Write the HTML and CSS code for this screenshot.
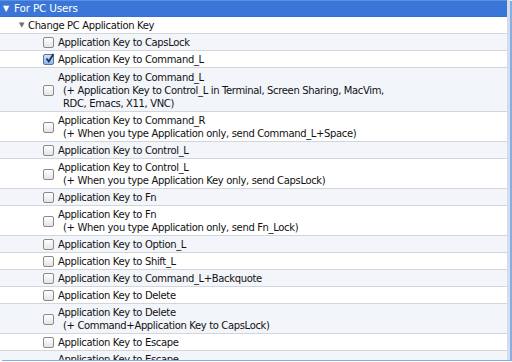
FILE: index.html
```html
<!DOCTYPE html>
<html lang="en">
<head>
    <meta charset="UTF-8">
    <title>KeyRemap4MacBook - For PC Users</title>
    <link rel="stylesheet" href="styles.css">
</head>
<body>
    <div class="outline">
        <div class="row header">
            <span class="disclosure">&#9660;</span>
            <span class="label">For PC Users</span>
        </div>
        <div class="row group">
            <span class="disclosure">&#9660;</span>
            <span class="label">Change PC Application Key</span>
        </div>

        <div class="row item">
            <span class="box"></span>
            <div class="label">Application Key to CapsLock</div>
        </div>
        <div class="row item">
            <span class="box checked"><svg viewBox="0 0 11 11" width="11" height="11"><path d="M2.5 5.5 L4.8 8.5 L9.5 1" fill="none" stroke="#1c2f57" stroke-width="1.8"/></svg></span>
            <div class="label">Application Key to Command_L</div>
        </div>
        <div class="row item">
            <span class="box"></span>
            <div class="label">Application Key to Command_L<span class="note">(+ Application Key to Control_L in Terminal, Screen Sharing, MacVim,<br>RDC, Emacs, X11, VNC)</span></div>
        </div>
        <div class="row item">
            <span class="box"></span>
            <div class="label">Application Key to Command_R<span class="note">(+ When you type Application only, send Command_L+Space)</span></div>
        </div>
        <div class="row item">
            <span class="box"></span>
            <div class="label">Application Key to Control_L</div>
        </div>
        <div class="row item">
            <span class="box"></span>
            <div class="label">Application Key to Control_L<span class="note">(+ When you type Application Key only, send CapsLock)</span></div>
        </div>
        <div class="row item">
            <span class="box"></span>
            <div class="label">Application Key to Fn</div>
        </div>
        <div class="row item">
            <span class="box"></span>
            <div class="label">Application Key to Fn<span class="note">(+ When you type Application only, send Fn_Lock)</span></div>
        </div>
        <div class="row item">
            <span class="box"></span>
            <div class="label">Application Key to Option_L</div>
        </div>
        <div class="row item">
            <span class="box"></span>
            <div class="label">Application Key to Shift_L</div>
        </div>
        <div class="row item">
            <span class="box"></span>
            <div class="label">Application Key to Command_L+Backquote</div>
        </div>
        <div class="row item">
            <span class="box"></span>
            <div class="label">Application Key to Delete</div>
        </div>
        <div class="row item">
            <span class="box"></span>
            <div class="label">Application Key to Delete<span class="note">(+ Command+Application Key to CapsLock)</span></div>
        </div>
        <div class="row item">
            <span class="box"></span>
            <div class="label">Application Key to Escape</div>
        </div>
        <div class="row item">
            <span class="box"></span>
            <div class="label">Application Key to Escape<span class="note">(+ When you type Application only, send Escape)</span></div>
        </div>
    </div>
</body>
</html>
```

FILE: styles.css
```css
body, html {
    margin: 0;
    padding: 0;
    height: 100%;
    overflow: hidden;
    background-color: #ffffff;
}

.outline {
    width: 507px;
    height: 360px;
    overflow: hidden;
    border-right: 3px solid #d6dde6;
    box-shadow: 2px 1px 0 0 #86aee6;
    font-family: "DejaVu Sans", sans-serif;
    font-size: 10px;
    letter-spacing: -0.35px;
    color: #111;
}

.row {
    display: flex;
    align-items: center;
    padding: 2px 0 1px;
    line-height: 13px;
    border-bottom: 1px solid #d3d5d8;
    background-color: #ffffff;
}

.row:nth-child(odd) {
    background-color: #f2f5fa;
}

.header {
    background-color: #3a76d7 !important;
    color: #ffffff;
    border-top: 1px solid #5d8fe0;
    padding-top: 1px;
    border-bottom: 1px solid #3470d2;
    font-size: 10.5px;
    letter-spacing: -0.2px;
}

.header .disclosure {
    width: 11px;
    padding-left: 3px;
    font-size: 8px;
    color: #ffffff;
}

.group {
    padding-left: 19px;
}

.group .disclosure {
    width: 9px;
    font-size: 7px;
    color: #6f6f6f;
}

.item {
    padding-left: 43px;
}

.item:nth-child(5) {
    padding-top: 3px;
}

.box {
    flex: none;
    width: 9px;
    height: 9px;
    margin-right: 4px;
    border: 1px solid #8a8a8a;
    border-radius: 2px;
    background: linear-gradient(#ffffff, #e4e4e4);
    position: relative;
}

.box.checked {
    background: linear-gradient(#cfe0f7, #8eb5ea);
    border-color: #5577a8;
}

.box svg {
    position: absolute;
    left: 0;
    top: -2px;
}

.note {
    display: block;
    padding-left: 5px;
}
```
